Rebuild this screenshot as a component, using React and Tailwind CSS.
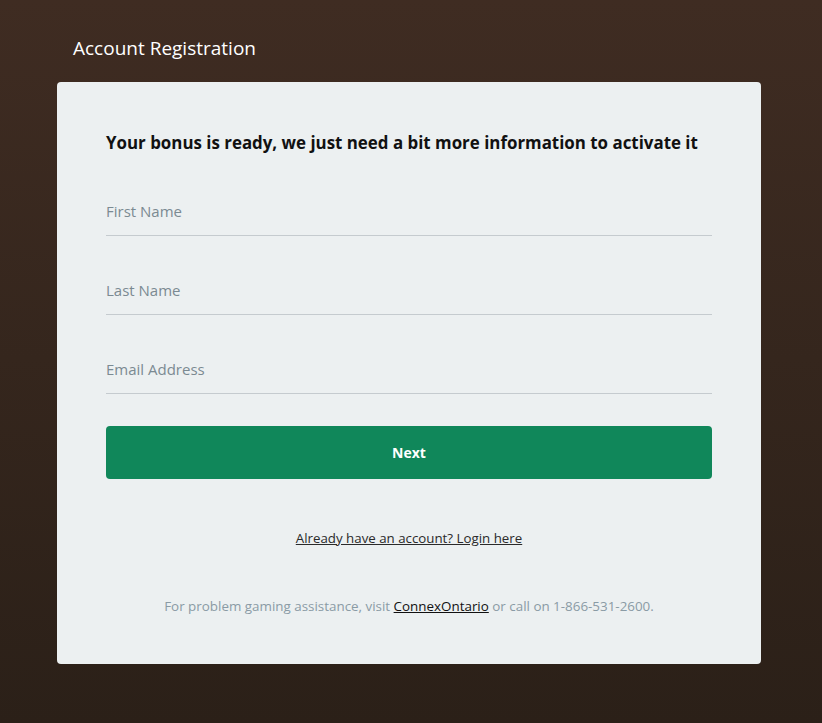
export default function App() {
  const font = { fontFamily: '"Segoe UI", "Open Sans", "Noto Sans", sans-serif' };
  return (
    <div className="min-h-[723px] w-full bg-gradient-to-b from-[#3f2c22] to-[#2b2018] pt-[36px] pb-[60px]" style={font}>
      <div className="ml-[73px] h-[46px] text-[19px] leading-[24px] text-white">Account Registration</div>
      <div className="mx-[57px] w-[704px] rounded-[4px] bg-[#ecf0f1] px-[49px] pt-[49px] pb-[48px]">
        <h1 className="whitespace-nowrap text-[16.9px] font-bold leading-[24px] text-[#111]">
          Your bonus is ready, we just need a bit more information to activate it
        </h1>
        <div className="mt-[37px] flex flex-col gap-[35px]">
          {["First Name", "Last Name", "Email Address"].map((l) => (
            <div key={l} className="h-[44px] border-b border-[#c5cbcf] pt-[8px] text-[15px] leading-[22px] text-[#7b8a92]">
              {l}
            </div>
          ))}
        </div>
        <button className="mt-[32px] h-[53px] w-full rounded-[4px] bg-[#10875a] text-[14px] font-bold text-white">
          Next
        </button>
        <div className="mt-[49px] text-center text-[13.3px] leading-[20px] text-[#2a2a2a]">
          <span className="underline">Already have an account? Login here</span>
        </div>
        <div className="mt-[48px] text-center text-[13.4px] leading-[20px] text-[#8a9ba5]">
          For problem gaming assistance, visit <span className="text-[#111] underline">ConnexOntario</span> or call on 1-866-531-2600.
        </div>
      </div>
    </div>
  );
}
